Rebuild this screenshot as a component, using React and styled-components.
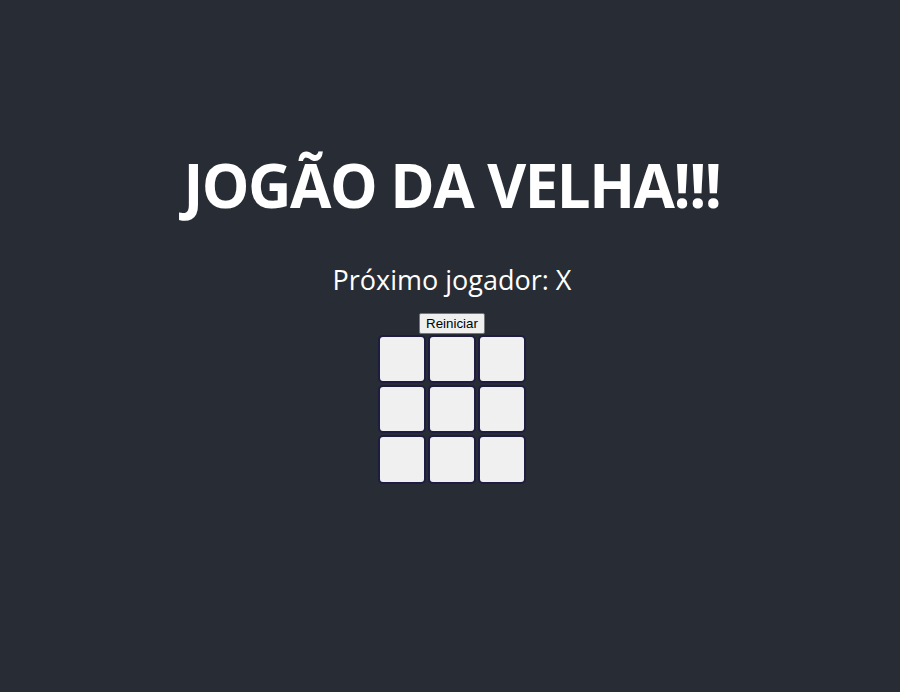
import React, { useState } from "react";
import styled, { createGlobalStyle } from "styled-components";

const GlobalStyle = createGlobalStyle`
  body {
    margin: 0;
    background: #282c34;
  }
`;

const Page = styled.div`
  min-height: 100vh;
  display: flex;
  flex-direction: column;
  align-items: center;
  padding: 149px 0 0 4px;
  box-sizing: border-box;
  color: #ffffff;
  font-family: "Open Sans", "Noto Sans", sans-serif;
`;

const Title = styled.h1`
  margin: 0;
  font-size: 60px;
  line-height: 72px;
  font-weight: 700;
  letter-spacing: -1.5px;
`;

const Status = styled.p`
  margin: 43px 0 0;
  font-size: 27px;
  line-height: 32px;
`;

const ResetButton = styled.button`
  margin-top: 17px;
  height: 21px;
  padding: 0 6px;
  font-family: "Liberation Sans", Arial, sans-serif;
  font-size: 13.33px;
  color: #000;
  background: #efefef;
  border: 1px solid #767676;
  border-radius: 2px;
`;

const Board = styled.div`
  margin-top: 1px;
  display: grid;
  grid-template-columns: repeat(3, 48px);
  grid-template-rows: 48px 48px 49px;
  gap: 2px;
`;

const Cell = styled.button`
  box-sizing: border-box;
  width: 48px;
  height: 100%;
  padding: 0;
  background: #f0f0f0;
  border: 2px solid #1e1c40;
  border-radius: 5px;
  font-family: "Open Sans", sans-serif;
  font-size: 28px;
  font-weight: 700;
  color: #282c34;
`;

const emptyBoard = Array(9).fill(null);

export default function App() {
  const [squares, setSquares] = useState(emptyBoard);
  const [xNext, setXNext] = useState(true);

  const play = (i) => {
    if (squares[i]) return;
    const next = squares.slice();
    next[i] = xNext ? "X" : "O";
    setSquares(next);
    setXNext(!xNext);
  };

  const reset = () => {
    setSquares(emptyBoard);
    setXNext(true);
  };

  return (
    <>
      <GlobalStyle />
      <Page>
        <Title>JOGÃO DA VELHA!!!</Title>
        <Status>Próximo jogador: {xNext ? "X" : "O"}</Status>
        <ResetButton onClick={reset}>Reiniciar</ResetButton>
        <Board>
          {squares.map((value, i) => (
            <Cell key={i} onClick={() => play(i)}>
              {value}
            </Cell>
          ))}
        </Board>
      </Page>
    </>
  );
}
